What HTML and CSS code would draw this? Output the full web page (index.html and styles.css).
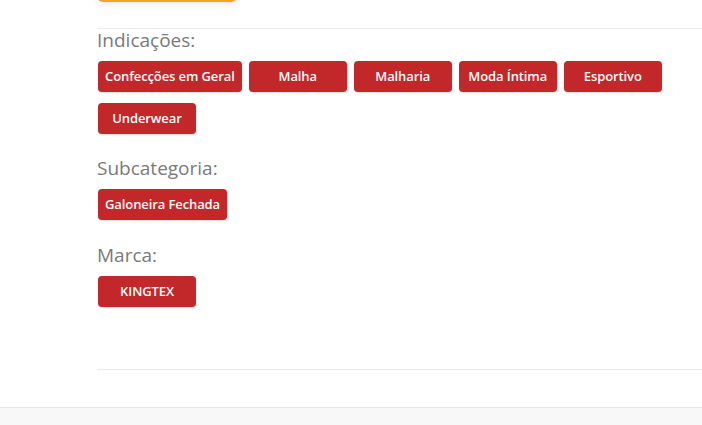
FILE: index.html
```html
<!DOCTYPE html>
<html lang="pt-BR">
<head>
<meta charset="utf-8">
<link rel="stylesheet" href="styles.css">
</head>
<body>
<main class="page">
  <div class="product">
    <div class="buy-row"><span class="buy-btn"></span></div>
    <hr class="divider">
    <section class="group">
      <h3 class="group-title">Indicações:</h3>
      <div class="tags">
        <a class="tag">Confecções em Geral</a>
        <a class="tag">Malha</a>
        <a class="tag">Malharia</a>
        <a class="tag">Moda Íntima</a>
        <a class="tag">Esportivo</a>
        <a class="tag">Underwear</a>
      </div>
    </section>
    <section class="group">
      <h3 class="group-title">Subcategoria:</h3>
      <div class="tags">
        <a class="tag">Galoneira Fechada</a>
      </div>
    </section>
    <section class="group group-last">
      <h3 class="group-title">Marca:</h3>
      <div class="tags">
        <a class="tag">KINGTEX</a>
      </div>
    </section>
    <hr class="divider bottom">
  </div>
</main>
<footer class="footer"></footer>
</body>
</html>
```
FILE: styles.css
```css
* { box-sizing: border-box; }
html, body { margin: 0; padding: 0; }
body {
  background: #fff;
  font-family: "Open Sans", "Liberation Sans", sans-serif;
  height: 425px;
  overflow: hidden;
  display: flex;
  flex-direction: column;
}
.page {
  flex: 1;
  padding-left: 97px;
}
.product { display: flex; flex-direction: column; }
.buy-row { height: 2px; overflow: visible; }
.buy-btn {
  display: block;
  width: 140px;
  height: 38px;
  margin-top: -36px;
  background: #f5a51d;
  border-radius: 6px;
  box-shadow: 0 3px 6px rgba(0,0,0,0.08);
}
.divider {
  border: 0;
  border-top: 1px solid #ebebeb;
  margin: 26px 0 0 0;
  height: 0;
}
.divider.bottom { margin-top: 62px; }
.group { display: flex; flex-direction: column; }
.group-title {
  margin: -1px 0 0 0;
  font-weight: 400;
  font-size: 19px;
  line-height: 24px;
  color: #7a7a7a;
}
.group + .group .group-title { margin-top: 22px; }
.group-last .group-title { margin-top: 23px !important; }
.tags {
  display: flex;
  flex-wrap: wrap;
  gap: 11px 7px;
  padding-left: 1px;
  margin-top: 9px;
}
.tag {
  display: flex;
  align-items: center;
  justify-content: center;
  min-width: 98px;
  height: 31px;
  padding: 0 7px 2px;
  background: #c2272a;
  border-radius: 4px;
  color: #fff;
  font-size: 13px;
  font-weight: 600;
  letter-spacing: -0.1px;
  box-shadow: 0 1px 2px rgba(0,0,0,0.15);
  white-space: nowrap;
}
.footer {
  height: 18px;
  flex: none;
  background: #f8f8f8;
  border-top: 1px solid #e6e6e6;
}
```
